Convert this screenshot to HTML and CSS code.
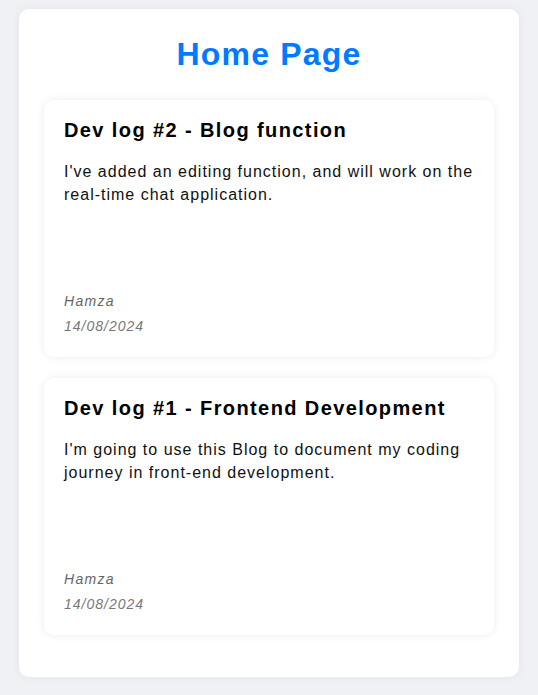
FILE: index.html
```html
<!DOCTYPE html>
<html>
<head>
<meta charset="utf-8">
<link rel="stylesheet" href="styles.css">
</head>
<body>
<div class="container">
  <h1 class="page-title">Home Page</h1>
  <div class="post">
    <h2 class="post-title">Dev log #2 - Blog function</h2>
    <p class="post-body">I've added an editing function, and will work on the real-time chat application.</p>
    <div class="post-meta">
      <p class="author">Hamza</p>
      <p class="date">14/08/2024</p>
    </div>
  </div>
  <div class="post">
    <h2 class="post-title">Dev log #1 - Frontend Development</h2>
    <p class="post-body">I'm going to use this Blog to document my coding journey in front-end development.</p>
    <div class="post-meta">
      <p class="author">Hamza</p>
      <p class="date">14/08/2024</p>
    </div>
  </div>
</div>
</body>
</html>
```

FILE: styles.css
```css
html, body {
  margin: 0;
  padding: 0;
}
body {
  background: #f0f1f5;
  font-family: "Liberation Sans", Arial, sans-serif;
  padding: 9px 19px 19px;
}
.container {
  background: #fff;
  border-radius: 10px;
  box-shadow: 0 0 10px rgba(0, 0, 0, 0.06);
  padding: 20px 25px 23px;
  display: flex;
  flex-direction: column;
  gap: 21px;
}
.page-title {
  margin: 7px 0 6px;
  text-align: center;
  color: #007bff;
  font-size: 32px;
  line-height: 37px;
  letter-spacing: 1.2px;
  font-weight: bold;
}
.post {
  height: 257px;
  box-sizing: border-box;
  background: #fff;
  border-radius: 10px;
  box-shadow: 0 0 8px rgba(0, 0, 0, 0.08);
  padding: 19px 20px 22px;
  display: flex;
  flex-direction: column;
}
.post:last-child {
  margin-bottom: 19px;
}
.post-title {
  margin: 0;
  font-size: 20px;
  line-height: 23px;
  letter-spacing: 1.4px;
  font-weight: bold;
  color: #000;
}
.post-body {
  margin: 18px 0 0;
  font-size: 16px;
  line-height: 23px;
  letter-spacing: 1px;
  color: #111;
  flex: 1;
}
.post-meta p {
  margin: 0;
  font-size: 14px;
  line-height: 17px;
  letter-spacing: 1.3px;
  font-style: italic;
  color: #666;
}
.post-meta .date {
  margin-top: 8px;
  letter-spacing: 1px;
  color: #777;
}
```
